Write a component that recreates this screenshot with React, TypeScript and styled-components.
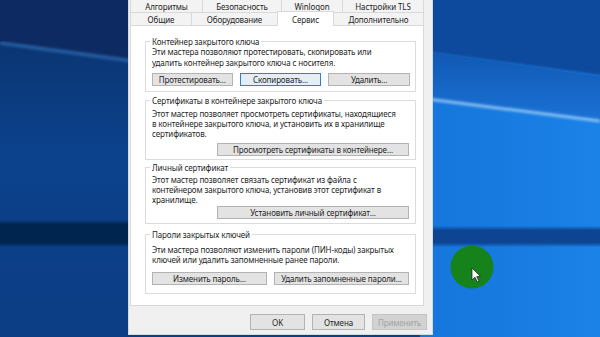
import React from 'react';
import styled, { createGlobalStyle } from 'styled-components';

const GlobalStyle = createGlobalStyle`
  html, body {
    margin: 0;
    padding: 0;
    overflow: hidden;
    background: #0b3f85;
  }
`;

const Desktop = styled.div`
  position: relative;
  width: 600px;
  height: 337px;
  overflow: hidden;
`;

const Wallpaper = styled.svg`
  position: absolute;
  left: 0;
  top: 0;
`;

const CursorMark = styled.svg`
  position: absolute;
  left: 450px;
  top: 245px;
`;

const Window = styled.div`
  position: absolute;
  left: 128px;
  top: -4px;
  width: 305px;
  height: 339px;
  box-sizing: border-box;
  display: flex;
  flex-direction: column;
  padding: 2px 5px 4px 1px;
  background: #f0f0f0;
  border: 1px solid #d3dae2;
  font-family: 'Noto Sans', 'Open Sans', sans-serif;
  font-size: 8px;
  letter-spacing: -0.12px;
  color: #262626;
`;

const TabRow = styled.div`
  display: flex;
  height: 13px;
  width: 294px;
`;

const Tab = styled.div<{ $w: number; $active?: boolean }>`
  position: relative;
  z-index: ${(p) => (p.$active ? 2 : 1)};
  box-sizing: border-box;
  width: ${(p) => p.$w}px;
  height: ${(p) => (p.$active ? 15 : 13)}px;
  margin-top: ${(p) => (p.$active ? -1 : 0)}px;
  margin-right: -1px;
  display: flex;
  align-items: center;
  justify-content: center;
  border: 1px solid #d9d9d9;
  border-bottom: none;
  background: ${(p) => (p.$active ? '#ffffff' : '#f3f3f3')};
  white-space: nowrap;
`;

const Pane = styled.div`
  box-sizing: border-box;
  width: 294px;
  height: 281px;
  display: flex;
  flex-direction: column;
  padding: 15px 7px 0 14px;
  background: #ffffff;
  border: 1px solid #d9d9d9;
`;

const GroupBox = styled.div<{ $mt: number; $pt: number; $pb: number }>`
  position: relative;
  margin-top: ${(p) => p.$mt}px;
  padding: ${(p) => p.$pt}px 5px ${(p) => p.$pb}px 6px;
  border: 1px solid #dcdcdc;
`;

const GroupTitle = styled.span`
  position: absolute;
  left: 4px;
  top: -6px;
  padding: 0 2px;
  line-height: 11px;
  background: #ffffff;
  white-space: nowrap;
`;

const Description = styled.div<{ $lh: number }>`
  line-height: ${(p) => p.$lh}px;
  white-space: nowrap;
`;

const ButtonRow = styled.div<{ $mt: number; $end?: boolean }>`
  display: flex;
  gap: 7px;
  margin-top: ${(p) => p.$mt}px;
  justify-content: ${(p) => (p.$end ? 'flex-end' : 'flex-start')};
  padding-right: ${(p) => (p.$end ? 1 : 0)}px;
`;

const Button = styled.div<{ $w: number; $h?: number; $focus?: boolean; $disabled?: boolean }>`
  box-sizing: border-box;
  width: ${(p) => p.$w}px;
  height: ${(p) => p.$h ?? 13}px;
  display: flex;
  align-items: center;
  justify-content: center;
  white-space: nowrap;
  background: ${(p) => (p.$disabled ? '#d2d2d2' : p.$focus ? '#e3eef9' : '#e3e3e3')};
  border: 1px solid ${(p) => (p.$disabled ? '#c4c4c4' : p.$focus ? '#2f7fd3' : '#b3b3b3')};
  color: ${(p) => (p.$disabled ? '#a3a3a3' : '#262626')};
`;

const Footer = styled.div`
  display: flex;
  justify-content: flex-end;
  gap: 7px;
  margin-top: 8px;
`;

const App: React.FC = () => {
  return (
    <Desktop>
      <GlobalStyle />
      <Wallpaper width="600" height="337" viewBox="0 0 600 337">
        <defs>
          <linearGradient id="leftBg" x1="0" y1="0" x2="0" y2="1">
            <stop offset="0" stopColor="#0a3069" />
            <stop offset="0.45" stopColor="#0c428c" />
            <stop offset="1" stopColor="#0b3d84" />
          </linearGradient>
          <linearGradient id="rightBg" x1="0" y1="0" x2="1" y2="0">
            <stop offset="0" stopColor="#1575da" />
            <stop offset="1" stopColor="#1b82e8" />
          </linearGradient>
          <linearGradient id="beam" x1="0" y1="0" x2="0" y2="1">
            <stop offset="0" stopColor="#1158b3" />
            <stop offset="1" stopColor="#1a72d6" />
          </linearGradient>
          <filter id="soft" x="-10%" y="-10%" width="120%" height="120%">
            <feGaussianBlur stdDeviation="1.5" />
          </filter>
        </defs>
        <rect x="0" y="0" width="140" height="337" fill="url(#leftBg)" />
        <polygon points="-10,-10 150,-10 150,63 -10,41" fill="#0a2c62" filter="url(#soft)" />
        <line x1="0" y1="43" x2="140" y2="62" stroke="#2c65aa" strokeWidth="3" filter="url(#soft)" />
        <rect x="-10" y="222" width="160" height="23" fill="#062650" filter="url(#soft)" />
        <rect x="420" y="0" width="180" height="337" fill="url(#rightBg)" />
        <polygon points="420,-10 610,-10 610,77 420,51" fill="#0b4a9c" filter="url(#soft)" />
        <polygon points="420,51 610,78 610,121 420,97" fill="url(#beam)" />
        <line x1="420" y1="98" x2="600" y2="121" stroke="#bfe0fb" strokeWidth="2" filter="url(#soft)" />
        <rect x="410" y="228" width="200" height="17" fill="#0a4592" filter="url(#soft)" />
      </Wallpaper>

      <CursorMark width="45" height="45" viewBox="0 0 45 45">
        <circle cx="22" cy="22" r="21.5" fill="#15821c" />
        <path
          d="M22 23 L22 35 L25 32.2 L27.4 37 L29 36.2 L26.7 31.5 L30.5 31.5 Z"
          fill="#ffffff"
          stroke="#1a1a1a"
          strokeWidth="0.7"
          strokeLinejoin="round"
        />
      </CursorMark>

      <Window>
        <TabRow>
          <Tab $w={73}>Алгоритмы</Tab>
          <Tab $w={80}>Безопасность</Tab>
          <Tab $w={62}>Winlogon</Tab>
          <Tab $w={82}>Настройки TLS</Tab>
        </TabRow>
        <TabRow>
          <Tab $w={62}>Общие</Tab>
          <Tab $w={87}>Оборудование</Tab>
          <Tab $w={57} $active>Сервис</Tab>
          <Tab $w={91}>Дополнительно</Tab>
        </TabRow>
        <Pane>
          <GroupBox $mt={0} $pt={4} $pb={5}>
            <GroupTitle>Контейнер закрытого ключа</GroupTitle>
            <Description $lh={11}>
              Эти мастера позволяют протестировать, скопировать или
              <br />
              удалить контейнер закрытого ключа с носителя.
            </Description>
            <ButtonRow $mt={5}>
              <Button $w={81}>Протестировать...</Button>
              <Button $w={82} $focus>Скопировать...</Button>
              <Button $w={82}>Удалить...</Button>
            </ButtonRow>
          </GroupBox>

          <GroupBox $mt={8} $pt={8} $pb={3}>
            <GroupTitle>Сертификаты в контейнере закрытого ключа</GroupTitle>
            <Description $lh={10}>
              Этот мастер позволяет просмотреть сертификаты, находящиеся
              <br />
              в контейнере закрытого ключа, и установить их в хранилище
              <br />
              сертификатов.
            </Description>
            <ButtonRow $mt={4} $end>
              <Button $w={192}>Просмотреть сертификаты в контейнере...</Button>
            </ButtonRow>
          </GroupBox>

          <GroupBox $mt={7} $pt={7} $pb={4}>
            <GroupTitle>Личный сертификат</GroupTitle>
            <Description $lh={10}>
              Этот мастер позволяет связать сертификат из файла с
              <br />
              контейнером закрытого ключа, установив этот сертификат в
              <br />
              хранилище.
            </Description>
            <ButtonRow $mt={1} $end>
              <Button $w={192}>Установить личный сертификат...</Button>
            </ButtonRow>
          </GroupBox>

          <GroupBox $mt={10} $pt={10} $pb={8}>
            <GroupTitle>Пароли закрытых ключей</GroupTitle>
            <Description $lh={10}>
              Эти мастера позволяют изменить пароли (ПИН-коды) закрытых
              <br />
              ключей или удалить запомненные ранее пароли.
            </Description>
            <ButtonRow $mt={7}>
              <Button $w={115}>Изменить пароль...</Button>
              <Button $w={135}>Удалить запомненные пароли...</Button>
            </ButtonRow>
          </GroupBox>
        </Pane>
        <Footer>
          <Button $w={55} $h={16}>OK</Button>
          <Button $w={53} $h={16}>Отмена</Button>
          <Button $w={55} $h={16} $disabled>Применить</Button>
        </Footer>
      </Window>
    </Desktop>
  );
};

export default App;
